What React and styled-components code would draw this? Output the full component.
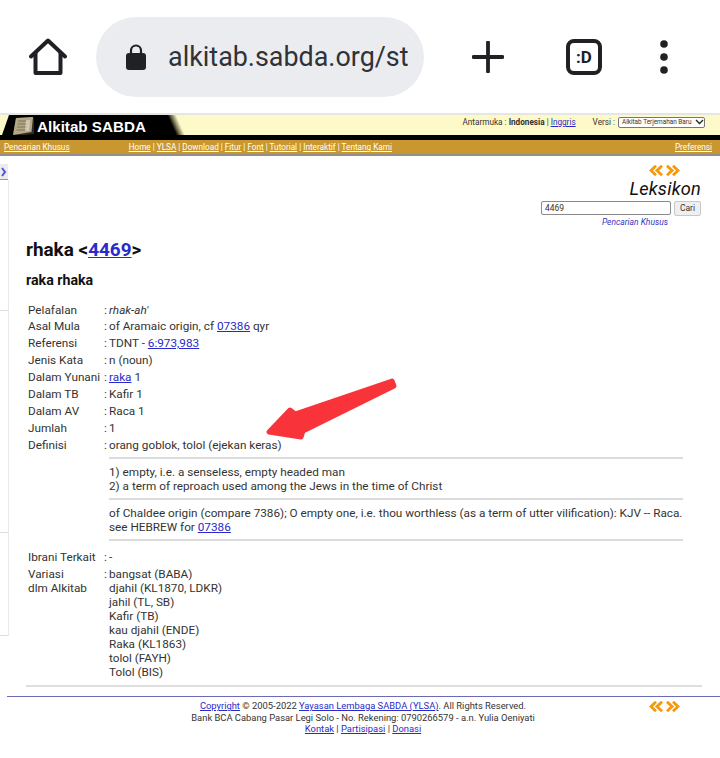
import React from "react";
import styled, { createGlobalStyle } from "styled-components";

const Global = createGlobalStyle`
  html, body { margin: 0; padding: 0; background: #fff; }
  body { font-family: Roboto, "Liberation Sans", sans-serif; color: #222; }
  a { color: #2a2ac8; }
`;

const Page = styled.div`
  position: relative;
  width: 720px;
  height: 758px;
  overflow: hidden;
  background: #fff;
`;

/* browser toolbar */
const Toolbar = styled.div`
  height: 113px;
  display: flex;
  align-items: center;
  box-sizing: border-box;
  padding-top: 1px;
`;

const ToolIcon = styled.div`
  width: ${(p) => p.$w}px;
  display: flex;
  justify-content: center;
  flex-shrink: 0;
`;

const Omnibox = styled.div`
  width: 328px;
  height: 80px;
  border-radius: 40px;
  background: #ebecf0;
  display: flex;
  align-items: center;
  padding-left: 30px;
  box-sizing: border-box;
  flex-shrink: 0;
`;

const UrlText = styled.div`
  margin-left: 22px;
  width: 240px;
  white-space: nowrap;
  font-size: 26.9px;
  color: #303236;
`;

const TabBox = styled.div`
  width: 36px;
  height: 36px;
  box-sizing: border-box;
  border: 4px solid #202124;
  border-radius: 8px;
  display: flex;
  align-items: center;
  justify-content: center;
  font-size: 17px;
  font-weight: 700;
  color: #202124;
`;

/* site banner */
const TopLine = styled.div`
  height: 2px;
  background: #e6e6e0;
`;

const Banner = styled.div`
  height: 20px;
  background: #fdf9c8;
  display: flex;
  justify-content: space-between;
`;

const LogoTab = styled.div`
  width: 186px;
  display: flex;
  align-items: center;
  padding: 2px 0 0 11px;
  box-sizing: border-box;
  background: linear-gradient(66deg, #000 161px, #6b6648 164px, #fdf9c8 169px);
  clip-path: polygon(2px 100%, 9px 0, 100% 0, 100% 100%);
`;

const LogoText = styled.span`
  margin-left: 3px;
  font-family: "Liberation Sans", Arial, sans-serif;
  font-size: 15.2px;
  font-weight: 700;
  color: #fff;
`;

const BannerRight = styled.div`
  display: flex;
  align-items: center;
  padding: 0 15px 6px 0;
  font-size: 8.2px;
  color: #333;
`;

const Versi = styled.span`
  margin: 0 2px 0 17px;
`;

const VersiSelect = styled.div`
  width: 82px;
  height: 9px;
  border: 1px solid #777;
  border-radius: 2px;
  background: #fff;
  font-size: 6.4px;
  line-height: 9px;
  padding-left: 3px;
  box-sizing: content-box;
  display: flex;
  justify-content: space-between;
  align-items: center;
  white-space: nowrap;
  margin-left: 1px;
`;

const BlackStrip = styled.div`
  height: 5px;
  background: #000;
`;

const NavBar = styled.div`
  height: 14px;
  background: #c9972f;
  border-bottom: 2px solid #8f8f8f;
  display: flex;
  align-items: center;
  padding: 0 8px 0 4px;
  font-size: 8.2px;
  color: #fff;
  a { color: #fff; }
`;

const NavLinks = styled.div`
  margin-left: 59px;
  flex: 1;
`;

/* body */
const Body = styled.div`
  display: flex;
  height: 538px;
`;

const Sidebar = styled.div`
  width: 9px;
  flex-shrink: 0;
  padding-top: 8px;
  box-sizing: border-box;
  display: flex;
  flex-direction: column;
`;

const Toggle = styled.div`
  width: 8px;
  height: 16px;
  background: #ececec;
  border-bottom: 1px solid #999;
  box-sizing: border-box;
  display: flex;
  align-items: center;
`;

const SideSection = styled.div`
  width: 9px;
  height: ${(p) => p.$h}px;
  border-right: 1px solid #eaeaea;
  border-bottom: 1px solid #dedede;
  box-sizing: border-box;
`;

const Main = styled.div`
  flex: 1;
  padding: 9px 19px 0 17px;
  min-width: 0;
`;

const SearchBox = styled.div`
  display: flex;
  flex-direction: column;
  align-items: flex-end;
`;

const Pager = styled.div`
  margin-right: ${(p) => p.$right}px;
  height: 12px;
  line-height: 0;
`;

const Heading = styled.div`
  font-size: 18.2px;
  font-style: italic;
  line-height: 21px;
  margin-top: 1px;
  color: #111;
  letter-spacing: 0.2px;
`;

const SearchRow = styled.div`
  display: flex;
  gap: 3px;
  margin-top: 2px;
`;

const SearchInput = styled.div`
  width: 130px;
  height: 14px;
  border: 1px solid #8a8a8a;
  border-radius: 2px;
  box-sizing: border-box;
  font-size: 8.5px;
  line-height: 12px;
  padding-left: 3px;
  color: #333;
`;

const SearchButton = styled.div`
  width: 27px;
  height: 15px;
  border: 1px solid #c8c8c8;
  border-radius: 2px;
  background: #efefef;
  box-sizing: border-box;
  font-size: 8.5px;
  line-height: 13px;
  text-align: center;
  color: #333;
`;

const SearchLink = styled.div`
  margin: 1px 33px 0 0;
  font-size: 8.5px;
  font-style: italic;
  line-height: 10px;
  color: #3535c0;
`;

const Title = styled.h1`
  margin: 12px 0 0;
  font-size: 18.9px;
  line-height: 22px;
  font-weight: 700;
  color: #111;
`;

const Subtitle = styled.h2`
  margin: 10px 0 0;
  font-size: 14.2px;
  line-height: 18px;
  font-weight: 700;
  color: #111;
`;

const Table = styled.div`
  margin: 13px 0 0 2px;
  display: grid;
  grid-template-columns: 75px 1fr;
  font-size: 11.75px;
  color: #333;
`;

const Label = styled.div`
  line-height: ${(p) => p.$lh || 17}px;
  height: ${(p) => p.$h || 17}px;
  white-space: nowrap;
`;

const Value = styled.div`
  line-height: ${(p) => p.$lh || 17}px;
  padding-left: 1px;
  white-space: nowrap;
  &::before {
    content: ":";
    display: inline-block;
    width: 5px;
  }
`;

const Plain = styled.div`
  line-height: 14px;
  padding-left: 6px;
  white-space: nowrap;
`;

const Def = styled.div`
  grid-column: 2;
  padding-left: 6px;
  margin: 3px 0 8px;
`;

const DefBlock = styled.div`
  border-top: 2px solid #dcdcdc;
  padding: 6px 0 5px;
  line-height: 14px;
  white-space: nowrap;
  color: #333;
  width: 574px;
  &:last-child { border-bottom: 2px solid #dcdcdc; }
`;

const Rule = styled.div`
  height: 2px;
  background: #dedede;
  width: 676px;
  margin-top: 6px;
`;

/* footer */
const FooterLine = styled.div`
  height: 1px;
  margin: 2px 0 0 7px;
  background: #6a6ab8;
`;

const Footer = styled.div`
  position: relative;
  padding: 3px 0 0 6px;
  text-align: center;
  font-size: 9.4px;
  line-height: 11.5px;
  color: #333;
`;

const FooterPager = styled.div`
  position: absolute;
  left: 649px;
  top: 4px;
  line-height: 0;
`;

const ArrowOverlay = styled.svg`
  position: absolute;
  left: 260px;
  top: 372px;
`;

const HomeIcon = () => (
  <svg width="38" height="38" viewBox="0 0 38 38" fill="none" stroke="#202124" strokeWidth="4" strokeLinejoin="round" strokeLinecap="round">
    <path d="M2 18.5 19 2.500 36 18.500" />
    <path d="M6.500 15v20h25V15" />
  </svg>
);

const LockIcon = () => (
  <svg width="20" height="26" viewBox="0 0 20 26">
    <path d="M5 10V6.500a5 5 0 0 1 10 0V10" fill="none" stroke="#202124" strokeWidth="2.200" />
    <rect x="0" y="9" width="20" height="17" rx="3" fill="#202124" />
  </svg>
);

const PlusIcon = () => (
  <svg width="32" height="32" viewBox="0 0 32 32" stroke="#202124" strokeWidth="3.800" strokeLinecap="round">
    <path d="M16 1.500v29M1.500 16h29" />
  </svg>
);

const DotsIcon = () => (
  <svg width="8" height="34" viewBox="0 0 8 34" fill="#202124">
    <circle cx="4" cy="4" r="3.800" />
    <circle cx="4" cy="17" r="3.800" />
    <circle cx="4" cy="30" r="3.800" />
  </svg>
);

const BookIcon = () => (
  <svg width="23" height="19" viewBox="0 0 23 19">
    <path d="M5 1 22 0l-1.500 15L2 18z" fill="#c9bd99" />
    <path d="M5 1 2 18l3 1 18-2 0-16z" fill="#8d7f62" opacity="0.35" />
    <path d="M7 4h11M6.500 7h11M6 10h11M5.500 13h11" stroke="#8f8468" strokeWidth="1.300" />
    <path d="M15 3l4 0-1 11-4 0z" fill="#e0dccf" opacity="0.7" />
  </svg>
);

const Chevrons = () => (
  <svg width="31" height="11" viewBox="0 0 31 11" fill="none" stroke="#f59a0c" strokeWidth="2.900">
    <path d="M7 .8 2 5.500 7 10.200M13 .8 8 5.500 13 10.200" />
    <path d="M18 .8 23 5.500 18 10.200M24 .8 29 5.500 24 10.200" />
  </svg>
);

const ToggleMark = () => (
  <svg width="7" height="10" viewBox="0 0 7 10" fill="none" stroke="#5252dc" strokeWidth="2">
    <path d="M2 1 5 5 2 9" />
  </svg>
);

const SelectCaret = () => (
  <svg width="9" height="6" viewBox="0 0 9 6" fill="none" stroke="#222" strokeWidth="1.300">
    <path d="M1 1l3.500 3.500L8 1" />
  </svg>
);

const RedArrow = () => (
  <ArrowOverlay width="145" height="75" viewBox="0 0 145 75">
    <path
      d="M132 9 35 42 30 38 9 60 41 65 43 59 134 14Z"
      fill="#f8333a"
      stroke="#f8333a"
      strokeWidth="5"
      strokeLinejoin="round"
    />
  </ArrowOverlay>
);

const rows = [
  ["Pelafalan", <i key="a">rhak-ah'</i>, 16],
  ["Asal Mula", <>of Aramaic origin, cf <a href="#">07386</a> qyr</>],
  ["Referensi", <>TDNT - <a href="#">6:973,983</a></>],
  ["Jenis Kata", "n (noun)"],
  ["Dalam Yunani", <><a href="#">raka</a> 1</>],
  ["Dalam TB", "Kafir 1"],
  ["Dalam AV", "Raca 1"],
  ["Jumlah", "1"],
  ["Definisi", "orang goblok, tolol (ejekan keras)"],
];

const variants = [
  "djahil (KL1870, LDKR)",
  "jahil (TL, SB)",
  "Kafir (TB)",
  "kau djahil (ENDE)",
  "Raka (KL1863)",
  "tolol (FAYH)",
  "Tolol (BIS)",
];

export default function App() {
  return (
    <Page>
      <Global />
      <Toolbar>
        <ToolIcon $w={96}><HomeIcon /></ToolIcon>
        <Omnibox>
          <LockIcon />
          <UrlText>alkitab.sabda.org/st</UrlText>
        </Omnibox>
        <ToolIcon $w={128}><PlusIcon /></ToolIcon>
        <ToolIcon $w={64}><TabBox>:D</TabBox></ToolIcon>
        <ToolIcon $w={96}><DotsIcon /></ToolIcon>
      </Toolbar>

      <TopLine />
      <Banner>
        <LogoTab>
          <BookIcon />
          <LogoText>Alkitab SABDA</LogoText>
        </LogoTab>
        <BannerRight>
          Antarmuka :&nbsp;<b>Indonesia</b>&nbsp;|&nbsp;<a href="#">Inggris</a>
          <Versi>Versi :</Versi>
          <VersiSelect>Alkitab Terjemahan Baru <SelectCaret /></VersiSelect>
        </BannerRight>
      </Banner>
      <BlackStrip />
      <NavBar>
        <a href="#">Pencarian Khusus</a>
        <NavLinks>
          <a href="#">Home</a> | <a href="#">YLSA</a> | <a href="#">Download</a> | <a href="#">Fitur</a> | <a href="#">Font</a> | <a href="#">Tutorial</a> | <a href="#">Interaktif</a> | <a href="#">Tentang Kami</a>
        </NavLinks>
        <a href="#">Preferensi</a>
      </NavBar>

      <Body>
        <Sidebar>
          <Toggle><ToggleMark /></Toggle>
          <SideSection $h={131} />
          <SideSection $h={222} />
          <SideSection $h={103} />
        </Sidebar>
        <Main>
          <SearchBox>
            <Pager $right={21}><Chevrons /></Pager>
            <Heading>Leksikon</Heading>
            <SearchRow>
              <SearchInput>4469</SearchInput>
              <SearchButton>Cari</SearchButton>
            </SearchRow>
            <SearchLink>Pencarian Khusus</SearchLink>
          </SearchBox>

          <Title>rhaka &lt;<a href="#">4469</a>&gt;</Title>
          <Subtitle>raka rhaka</Subtitle>

          <Table>
            {rows.map(([label, value, h]) => (
              <React.Fragment key={label}>
                <Label $h={h} $lh={h}>{label}</Label>
                <Value $lh={h}>{value}</Value>
              </React.Fragment>
            ))}
            <Def>
              <DefBlock>
                1) empty, i.e. a senseless, empty headed man<br />
                2) a term of reproach used among the Jews in the time of Christ
              </DefBlock>
              <DefBlock>
                of Chaldee origin (compare 7386); O empty one, i.e. thou worthless (as a term of utter vilification): KJV -- Raca.<br />
                see HEBREW for <a href="#">07386</a>
              </DefBlock>
            </Def>
            <Label $h={18}>Ibrani Terkait</Label>
            <Value>-</Value>
            <Label $lh={14} $h={14}>Variasi<br />dlm Alkitab</Label>
            <div>
              <Value $lh={14}>bangsat (BABA)</Value>
              {variants.map((v) => (
                <Plain key={v}>{v}</Plain>
              ))}
            </div>
          </Table>
          <Rule />
        </Main>
      </Body>

      <FooterLine />
      <Footer>
        <a href="#">Copyright</a> © 2005-2022 <a href="#">Yayasan Lembaga SABDA (YLSA)</a>. All Rights Reserved.<br />
        Bank BCA Cabang Pasar Legi Solo - No. Rekening: 0790266579 - a.n. Yulia Oeniyati<br />
        <a href="#">Kontak</a> | <a href="#">Partisipasi</a> | <a href="#">Donasi</a>
        <FooterPager><Chevrons /></FooterPager>
      </Footer>

      <RedArrow />
    </Page>
  );
}
